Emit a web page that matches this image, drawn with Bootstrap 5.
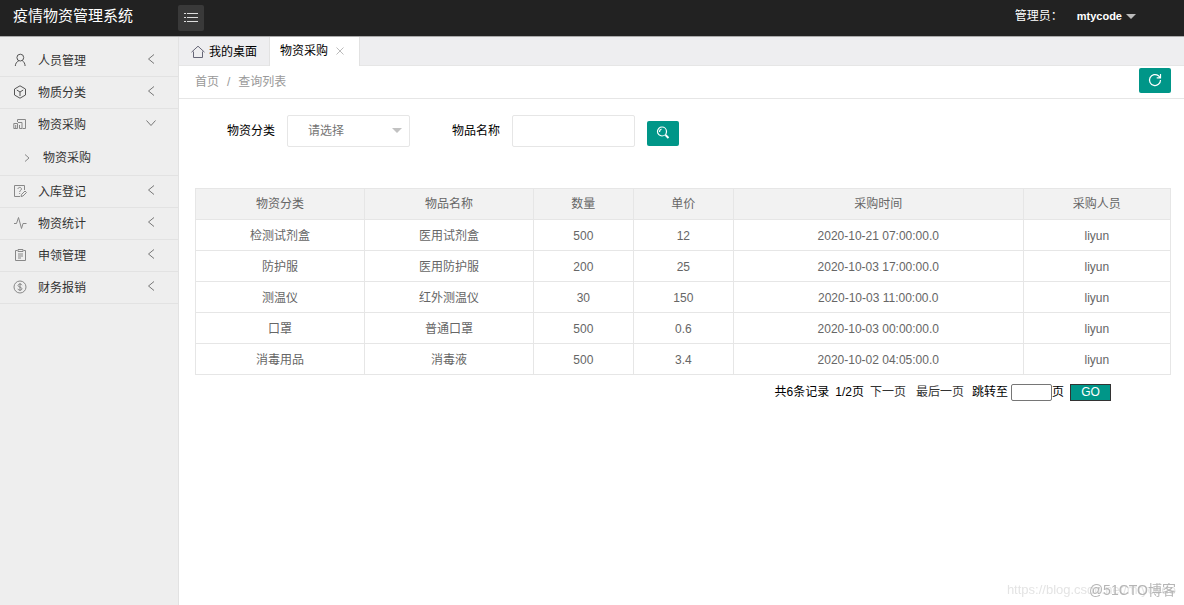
<!DOCTYPE html>
<html lang="zh-CN">
<head>
<meta charset="utf-8">
<meta name="viewport" content="width=device-width, initial-scale=1">
<title>疫情物资管理系统</title>
<link href="https://cdn.jsdelivr.net/npm/bootstrap@5.3.0/dist/css/bootstrap.min.css" rel="stylesheet">
<script defer src="https://cdn.jsdelivr.net/npm/bootstrap@5.3.0/dist/js/bootstrap.bundle.min.js"></script>
<style>
  body { font-family: "Liberation Sans", "Noto Sans CJK SC", sans-serif; font-size: 12px; line-height: 20px; color: #000; background: #fff; }
  a { color: inherit; text-decoration: none; }
  svg { display: block; fill: none; stroke: currentColor; flex: none; }
  .topbar { height: 37px; background: #222; color: #fff; border-bottom: 1px solid #aaa; }
  .brand { width: 178px; font-size: 15px; padding: 0 0 4px 13px; }
  .toggle { width: 26px; height: 26px; background: #393939; color: #ddd; border: 0; border-radius: 2px; }
  .account { gap: 14px; }
  .user { font-weight: 700; font-size: 11px; gap: 4px; }
  .caret { border: 5px solid transparent; border-top: 5px solid #bbb; border-bottom: 0; }
  .side { width: 179px; background: #eee; border-right: 1px solid #e2e2e2; padding-top: 8px; color: #333; }
  .side li { border-bottom: 1px solid #e2e2e2; }
  .entry { height: 31px; padding: 0 22px 0 13px; }
  .entry .title { margin-left: 11px; }
  .entry .arrow { margin-top: -4px; color: #777; }
  .entry .glyph { color: #555; margin-bottom: 2px; }
  .entry .faint { color: #888; }
  .child { height: 35px; padding-left: 21px; }
  .tabs { height: 29px; background: #eeeef0; border-bottom: 1px solid #e6e6e6; }
  .tab-item { height: 29px; border-right: 1px solid #e2e2e2; }
  .tab-on { background: #fff; padding: 0 15px 2px 10px; }
  .home { color: #667; }
  .close-tab { color: #bbb; }
  .chev { color: #888; }
  .crumbs { height: 33px; padding: 0 13px 0 16px; color: #999; border-bottom: 1px solid #e6e6e6; }
  .act { background: #009688; color: #fff; border: 0; border-radius: 2px; width: 32px; height: 25px; }
  .filters { padding: 16px 0 41px 48px; gap: 12px; }
  .field { width: 123px; height: 32px; border: 1px solid #e6e6e6; border-radius: 2px; background: #fff; font-size: 12px; color: #757575; padding: 0 20px; }
  .second { margin-left: 30px; }
  .pick select { appearance: none; }
  .pick .caret { right: 8px; top: 13px; border-top-color: #c2c2c2; }
  .list-area { padding: 0 13px 0 16px; }
  .grid-list { text-align: center; margin: 0; table-layout: fixed; }
  .grid-list > :not(caption) > * > * { padding: 6px 5px 4px; border: 1px solid #e6e6e6; color: #666; font-weight: 400; }
  .grid-list > thead > tr > th { background: #f2f2f2; padding: 5px; }
  .pager { padding: 7px 60px 0 0; gap: 6px; }
  .pager a { color: #333; }
  .pager .last { margin: 0 2px 0 4px; }
  .pager input { width: 41px; height: 17px; border: 1px solid #767676; border-radius: 2px; padding: 0 2px; margin-left: 3px; }
  .go { width: 41px; height: 17px; background: #009688; color: #fff; border: 1px solid #333; line-height: 14px; padding: 0; }
  .stamp { right: 8px; bottom: 5px; font-size: 14px; color: #b5b5b5; }
  .stamp-url { right: 8px; bottom: 5px; font-size: 13px; color: #e4e4e4; }
</style>
</head>
<body class="d-flex flex-column min-vh-100">
<svg class="d-none">
  <symbol id="left" viewBox="0 0 10 12"><path d="M8 1.500 2.500 6 8 10.500"/></symbol>
</svg>
<header class="topbar d-flex align-items-center">
  <div class="brand">疫情物资管理系统</div>
  <button class="toggle d-flex align-items-center justify-content-center p-0" aria-label="菜单">
    <svg width="14" height="12" viewBox="0 0 14 12"><path d="M3 1.500h11M3 5.500h11M3 9.500h11M0 1.500h2M0 5.500h2M0 9.500h2"/></svg>
  </button>
  <div class="account ms-auto d-flex align-items-center pe-5 pb-1">
    <span>管理员：</span>
    <a href="#" class="user d-flex align-items-center">mtycode<span class="caret"></span></a>
  </div>
</header>
<div class="d-flex flex-grow-1">
  <nav class="side flex-shrink-0" aria-label="主菜单">
    <ul class="list-unstyled m-0">
      <li><a href="#" class="entry d-flex align-items-center">
        <svg class="glyph" width="14" height="14" viewBox="0 0 14 14"><circle cx="7.300" cy="4.600" r="3.400"/><path d="M5.800 7.800C3.600 8.800 2.500 10.500 2.300 13M9.200 7.500c1.800 1.300 2.800 3 2.900 5.500"/></svg>
        <span class="title">人员管理</span><svg class="arrow ms-auto" width="10" height="12"><use href="#left"/></svg></a></li>
      <li><a href="#" class="entry d-flex align-items-center">
        <svg class="glyph" width="14" height="14" viewBox="0 0 14 14"><path d="M7 .8 12.500 4v6L7 13.200 1.500 10V4zM3.800 5 7 7l3.200-2M7 7v4"/></svg>
        <span class="title">物质分类</span><svg class="arrow ms-auto" width="10" height="12"><use href="#left"/></svg></a></li>
      <li><a href="#" class="entry d-flex align-items-center">
        <svg class="glyph faint" width="14" height="14" viewBox="0 0 14 14"><path d="M4.500 5V2.500h8v9h-3M.8 11.500v-5h3.700v5zM2.700 8v3.500M5 5.500h4v6H6.500v-3.500"/></svg>
        <span class="title">物资采购</span><svg class="arrow ms-auto" width="10" height="8" viewBox="0 0 10 8"><path d="m.5 1.500 4.500 5 4.500-5"/></svg></a>
        <a href="#" class="child d-flex align-items-center">
        <svg class="chev" width="10" height="10" viewBox="0 0 10 10"><path d="m4 1.500 4 3.500-4 3.500"/></svg><span class="ms-2 ps-1">物资采购</span></a></li>
      <li><a href="#" class="entry d-flex align-items-center">
        <svg class="glyph faint" width="14" height="14" viewBox="0 0 14 14"><path d="M11.500 6V1.500h-10v11H7M5 5c0-2.200 3.500-2 3.500 0C8.500 6.500 6.700 6 6.700 8M6.700 9v1M8 12.500l.5-2L12 7l1.500 1.500-3.500 3.500z"/></svg>
        <span class="title">入库登记</span><svg class="arrow ms-auto" width="10" height="12"><use href="#left"/></svg></a></li>
      <li><a href="#" class="entry d-flex align-items-center">
        <svg class="glyph faint" width="14" height="14" viewBox="0 0 14 14"><path d="M1 7.500h2.500L5.500 1.500l3 11 1.500-5h3.500"/></svg>
        <span class="title">物资统计</span><svg class="arrow ms-auto" width="10" height="12"><use href="#left"/></svg></a></li>
      <li><a href="#" class="entry d-flex align-items-center">
        <svg class="glyph faint" width="14" height="14" viewBox="0 0 14 14"><path d="M4.500 2.500h-2v10h10v-10h-2M5 1.500h5v2H5zM5 6h5M5 8h5M5 10h3"/></svg>
        <span class="title">申领管理</span><svg class="arrow ms-auto" width="10" height="12"><use href="#left"/></svg></a></li>
      <li><a href="#" class="entry d-flex align-items-center">
        <svg class="glyph faint" width="14" height="14" viewBox="0 0 14 14"><circle cx="7" cy="7" r="6"/><path d="M9 5.200C8.500 3.500 5 3.700 5 5.500S9 7 9 8.800s-3.800 2-4.200 0M7 3v8"/></svg>
        <span class="title">财务报销</span><svg class="arrow ms-auto" width="10" height="12"><use href="#left"/></svg></a></li>
    </ul>
  </nav>
  <main class="flex-grow-1">
    <div class="tabs d-flex">
      <a href="#" class="tab-item d-flex align-items-center ps-2 ms-1">
        <svg class="home me-1" width="14" height="14" viewBox="0 0 14 14"><path d="M.5 7.200 7 1.200l6.500 6M2.500 6.500v6h9v-6"/></svg><span class="pe-2 me-1">我的桌面</span></a>
      <div class="tab-item tab-on d-flex align-items-center"><span>物资采购</span>
        <svg class="close-tab ms-2" width="8" height="8" viewBox="0 0 8 8"><path d="m.5.5 7 7m0-7-7 7"/></svg></div>
    </div>
    <div class="crumbs d-flex align-items-center">
      <nav aria-label="路径"><a href="#">首页</a><span class="mx-2">/</span><a href="#">查询列表</a></nav>
      <button class="act ms-auto mb-1 p-0 d-flex align-items-center justify-content-center" aria-label="刷新">
        <svg width="14" height="14" viewBox="0 0 14 14" stroke-width="1.200"><path d="M12.500 7A5.500 5.500 0 1 1 10.500 2.800l1.500 1.500M12.500 1v3.800H8.700"/></svg></button>
    </div>
    <form class="filters d-flex align-items-center">
      <label for="kind">物资分类</label>
      <div class="pick position-relative"><select id="kind" class="field"><option>请选择</option></select><span class="caret position-absolute pe-none"></span></div>
      <label for="goods" class="second">物品名称</label>
      <input id="goods" class="field" type="text">
      <button type="button" class="act p-0 mt-1 d-flex align-items-center justify-content-center" aria-label="查询">
        <svg width="14" height="14" viewBox="0 0 14 14" stroke-width="1.200"><circle cx="6" cy="5.500" r="4.500"/><path d="M3.500 6A3 3 0 0 1 5.500 3"/><path stroke-width="2" d="m9.500 9 3 3"/></svg></button>
    </form>
    <div class="list-area">
      <table class="table grid-list">
        <colgroup><col style="width:17.330%"><col style="width:17.330%"><col style="width:10.250%"><col style="width:10.250%"><col style="width:29.740%"><col style="width:15.100%"></colgroup>
        <thead><tr><th>物资分类</th><th>物品名称</th><th>数量</th><th>单价</th><th>采购时间</th><th>采购人员</th></tr></thead>
        <tbody>
          <tr><td>检测试剂盒</td><td>医用试剂盒</td><td>500</td><td>12</td><td>2020-10-21 07:00:00.0</td><td>liyun</td></tr>
          <tr><td>防护服</td><td>医用防护服</td><td>200</td><td>25</td><td>2020-10-03 17:00:00.0</td><td>liyun</td></tr>
          <tr><td>测温仪</td><td>红外测温仪</td><td>30</td><td>150</td><td>2020-10-03 11:00:00.0</td><td>liyun</td></tr>
          <tr><td>口罩</td><td>普通口罩</td><td>500</td><td>0.6</td><td>2020-10-03 00:00:00.0</td><td>liyun</td></tr>
          <tr><td>消毒用品</td><td>消毒液</td><td>500</td><td>3.4</td><td>2020-10-02 04:05:00.0</td><td>liyun</td></tr>
        </tbody>
      </table>
      <form class="pager d-flex align-items-center justify-content-end">
        <span>共6条记录</span><span>1/2页</span>
        <a href="#">下一页</a><a href="#" class="last">最后一页</a>
        <div class="d-flex align-items-center"><label for="page">跳转至</label><input id="page" type="text"><span>页</span></div>
        <button type="button" class="go">GO</button>
      </form>
    </div>
  </main>
</div>
<div class="stamp-url position-fixed pe-none">https://blog.csdn.net/mtycode</div>
<div class="stamp position-fixed pe-none">@51CTO博客</div>
</body>
</html>
